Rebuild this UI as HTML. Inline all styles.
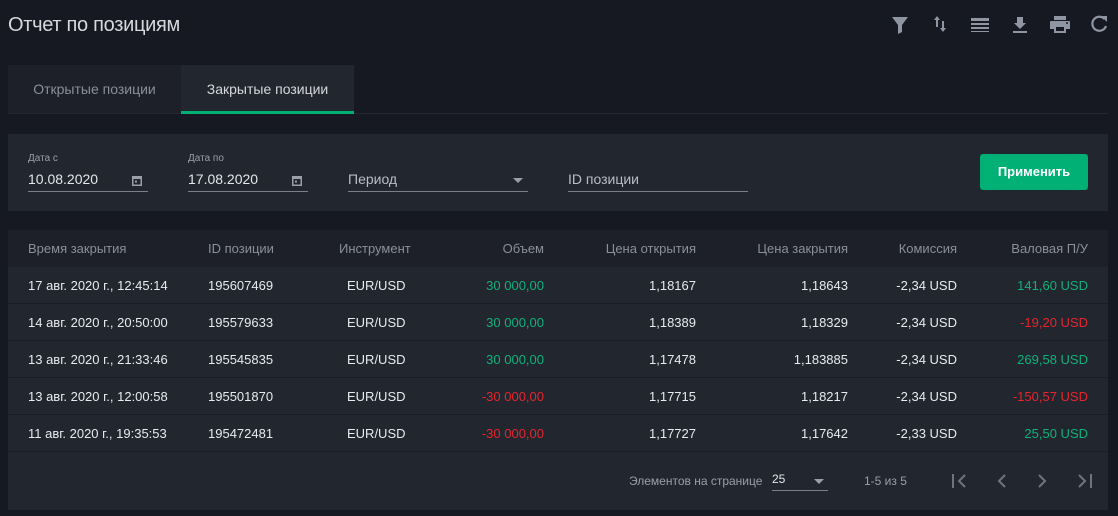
<!DOCTYPE html>
<html><head><meta charset="utf-8"><style>
*{box-sizing:border-box;margin:0;padding:0}
body{width:1118px;height:516px;background:#161922;font-family:"Liberation Sans",sans-serif;color:#e4e6ea;position:relative;overflow:hidden}
.abs{position:absolute}
.title{left:8px;top:14px;font-size:20px;color:#d6d8dc;letter-spacing:-0.3px}
.ic{position:absolute;top:14px}
.tabs{left:8px;top:65px;width:1100px;height:49px;border-bottom:1px solid #242831}
.tab{position:absolute;top:0;height:48px;width:173px;background:#1d2029;font-size:14px;line-height:48px;text-align:center;color:#8a8f99}
.tab.act{left:173px;background:#22262f;color:#d6d8dc;border-bottom:3px solid #00b074;height:49px}
.filt{left:8px;top:134px;width:1100px;height:77px;background:#22262f}
.lab{font-size:10px;color:#9a9fa8}
.inp{font-size:14px;color:#e4e6ea;border-bottom:1px solid #7a7f88;height:24px;padding-top:3px}
.btn{left:980px;top:154px;width:108px;height:36px;background:#00b074;border-radius:3px;color:#fff;font-weight:bold;font-size:13px;text-align:center;line-height:36px}
.tbl{left:8px;top:230px;width:1100px;height:280px;background:#22262f}
.hd{position:absolute;left:0;top:0;width:1100px;height:37px;background:#1d2029;font-size:13px;color:#8a8f99}
.row{position:absolute;left:0;width:1100px;height:37px;border-bottom:1px solid #1a1d25;font-size:13px;color:#e8eaee}
.c{position:absolute;top:11px;white-space:nowrap}
.g{color:#0fb27a}.r{color:#e8242c}
</style></head><body>
<div class="abs title">Отчет по позициям</div>
<svg class="ic" style="left:891px" width="18" height="20" viewBox="0 0 18 20"><path d="M1 3h16l-6 8v7l-4 2v-9z" fill="#8f96a3"/></svg>
<svg class="ic" style="left:932px" width="16" height="20" viewBox="0 0 16 20"><path d="M5 2l-3 4h2v7h2V6h2zM11 18l3-4h-2V7h-2v7H8z" fill="#8f96a3"/></svg>
<svg class="ic" style="left:970px" width="20" height="20" viewBox="0 0 20 20"><path d="M1 4h18v3H1zM1 9h18v2H1zM1 13h18v2H1zM1 17h18v1H1z" fill="#8f96a3"/></svg>
<svg class="ic" style="left:1012px" width="16" height="20" viewBox="0 0 16 20"><path d="M5 3h6v6h3l-6 6-6-6h3zM1 17h14v2H1z" fill="#8f96a3"/></svg>
<svg class="ic" style="left:1049px" width="22" height="20" viewBox="0 0 22 20"><path d="M5 2h12v4H5zM2 7h18a1 1 0 011 1v7h-4v4H5v-4H1V8a1 1 0 011-1zM7 13v4h8v-4z" fill="#8f96a3"/><circle cx="18" cy="9" r="1" fill="#161922"/></svg>
<svg class="ic" style="left:1089px" width="20" height="20" viewBox="0 0 20 20"><path d="M15.5 5A7 7 0 1 0 17 12" stroke="#8f96a3" stroke-width="2.2" fill="none"/><path d="M12 2h6v6z" fill="#8f96a3"/></svg>

<div class="abs tabs"><div class="tab" style="left:0">Открытые позиции</div><div class="tab act">Закрытые позиции</div></div>

<div class="abs filt">
 <div class="abs lab" style="left:20px;top:19px">Дата с</div>
 <div class="abs inp" style="left:20px;top:34px;width:120px">10.08.2020<svg style="position:absolute;left:104px;top:7px" width="10" height="11"><path d="M0 1h10v10H0zM1.5 4v5.5h7V4z" fill="#9a9fa8"/><rect x="3" y="5.5" width="2" height="2" fill="#9a9fa8"/></svg></div>
 <div class="abs lab" style="left:180px;top:19px">Дата по</div>
 <div class="abs inp" style="left:180px;top:34px;width:120px">17.08.2020<svg style="position:absolute;left:104px;top:7px" width="10" height="11"><path d="M0 1h10v10H0zM1.5 4v5.5h7V4z" fill="#9a9fa8"/><rect x="3" y="5.5" width="2" height="2" fill="#9a9fa8"/></svg></div>
 <div class="abs inp" style="left:340px;top:34px;width:180px;color:#b9bdc4">Период<svg style="position:absolute;left:165px;top:10px" width="10" height="5"><path d="M0 0h10L5 5z" fill="#9a9fa8"/></svg></div>
 <div class="abs inp" style="left:560px;top:34px;width:180px;color:#b9bdc4">ID позиции</div>
</div>
<div class="abs btn">Применить</div>

<div class="abs tbl">
 <div class="hd">
  <span class="c" style="left:20px">Время закрытия</span><span class="c" style="left:200px">ID позиции</span><span class="c" style="left:331px">Инструмент</span>
  <span class="c" style="right:564px">Объем</span><span class="c" style="right:412px">Цена открытия</span><span class="c" style="right:260px">Цена закрытия</span><span class="c" style="right:151px">Комиссия</span><span class="c" style="right:20px">Валовая П/У</span>
 </div>
 <div class="row" style="top:37px"><span class="c" style="left:20px">17 авг. 2020 г., 12:45:14</span><span class="c" style="left:200px">195607469</span><span class="c" style="left:339px">EUR/USD</span><span class="c g" style="right:564px">30 000,00</span><span class="c" style="right:412px">1,18167</span><span class="c" style="right:260px">1,18643</span><span class="c" style="right:151px">-2,34 USD</span><span class="c g" style="right:20px">141,60 USD</span></div>
 <div class="row" style="top:74px"><span class="c" style="left:20px">14 авг. 2020 г., 20:50:00</span><span class="c" style="left:200px">195579633</span><span class="c" style="left:339px">EUR/USD</span><span class="c g" style="right:564px">30 000,00</span><span class="c" style="right:412px">1,18389</span><span class="c" style="right:260px">1,18329</span><span class="c" style="right:151px">-2,34 USD</span><span class="c r" style="right:20px">-19,20 USD</span></div>
 <div class="row" style="top:111px"><span class="c" style="left:20px">13 авг. 2020 г., 21:33:46</span><span class="c" style="left:200px">195545835</span><span class="c" style="left:339px">EUR/USD</span><span class="c g" style="right:564px">30 000,00</span><span class="c" style="right:412px">1,17478</span><span class="c" style="right:260px">1,183885</span><span class="c" style="right:151px">-2,34 USD</span><span class="c g" style="right:20px">269,58 USD</span></div>
 <div class="row" style="top:148px"><span class="c" style="left:20px">13 авг. 2020 г., 12:00:58</span><span class="c" style="left:200px">195501870</span><span class="c" style="left:339px">EUR/USD</span><span class="c r" style="right:564px">-30 000,00</span><span class="c" style="right:412px">1,17715</span><span class="c" style="right:260px">1,18217</span><span class="c" style="right:151px">-2,34 USD</span><span class="c r" style="right:20px">-150,57 USD</span></div>
 <div class="row" style="top:185px"><span class="c" style="left:20px">11 авг. 2020 г., 19:35:53</span><span class="c" style="left:200px">195472481</span><span class="c" style="left:339px">EUR/USD</span><span class="c r" style="right:564px">-30 000,00</span><span class="c" style="right:412px">1,17727</span><span class="c" style="right:260px">1,17642</span><span class="c" style="right:151px">-2,33 USD</span><span class="c g" style="right:20px">25,50 USD</span></div>
 <div class="abs" style="left:621px;top:244px;font-size:12px;color:#9a9fa8">Элементов на странице</div>
 <div class="abs" style="left:764px;top:242px;width:56px;height:19px;border-bottom:1px solid #7a7f88;font-size:12px;color:#e4e6ea">25<svg style="position:absolute;left:42px;top:7px" width="10" height="5"><path d="M0 0h10L5 5z" fill="#9a9fa8"/></svg></div>
 <div class="abs" style="left:856px;top:244px;font-size:12px;color:#9a9fa8">1-5 из 5</div>
 <svg class="abs" style="left:940px;top:242px" width="150" height="18" viewBox="0 0 150 18"><g stroke="#6f7580" stroke-width="2" fill="none"><path d="M5 2v14M17 3l-6 6 6 6M57 3l-6 6 6 6M91 3l6 6-6 6M131 3l6 6-6 6M143 2v14"/></g></svg>
</div>
</body></html>
